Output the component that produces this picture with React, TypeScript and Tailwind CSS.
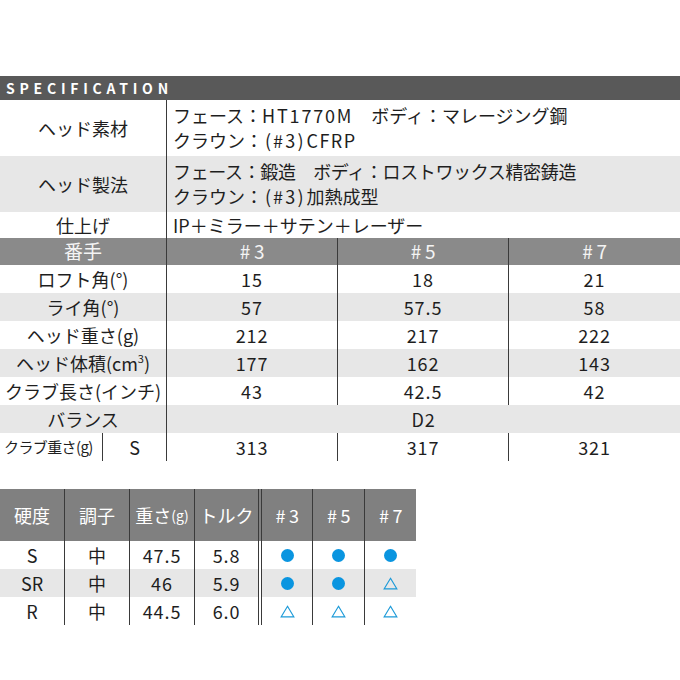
import React from "react";

const LINE = "border-[#3a3a3a]";

function Dot() {
  return <span className="inline-block w-[13px] h-[13px] rounded-full bg-[#0a95e0]" />;
}
function Tri() {
  return (
    <svg width="15" height="13" viewBox="0 0 15 13">
      <path d="M7.5 1.3 L13.8 11.8 L1.2 11.8 Z" fill="none" stroke="#1c9ad8" strokeWidth="1.2" />
    </svg>
  );
}

function Paren3() {
  return (
    <span>
      <span className="mx-[2px]">(</span>
      <span className="tracking-[0.12em]">#3</span>
      <span className="mr-[3px]">)</span>
    </span>
  );
}

const rows: { label: React.ReactNode; v: string[]; gray: boolean }[] = [
  { label: "ロフト角(°)", v: ["15", "18", "21"], gray: false },
  { label: "ライ角(°)", v: ["57", "57.5", "58"], gray: true },
  { label: "ヘッド重さ(g)", v: ["212", "217", "222"], gray: false },
  {
    label: (
      <>
        ヘッド体積(cm<span className="text-[11px] relative -top-[5px]">3</span>)
      </>
    ),
    v: ["177", "162", "143"],
    gray: true,
  },
  { label: "クラブ長さ(インチ)", v: ["43", "42.5", "42"], gray: false },
];

const shafts = [
  { h: "S", c: "中", w: "47.5", t: "5.8", m: ["d", "d", "d"], gray: false },
  { h: "SR", c: "中", w: "46", t: "5.9", m: ["d", "d", "t"], gray: true },
  { h: "R", c: "中", w: "44.5", t: "6.0", m: ["t", "t", "t"], gray: false },
];

const NUM = "tracking-[0.05em]";

export default function App() {
  return (
    <div
      className="w-[680px] h-[680px] bg-white text-[#1e1e1e] overflow-hidden"
      style={{ fontFamily: "'Noto Sans CJK JP', 'Noto Sans', sans-serif" }}
    >
      <div className="h-[76px]" />
      <div className="h-[24px] bg-[#595959] text-white font-bold text-[14px] tracking-[0.34em] pl-[6px] flex items-center">
        SPECIFICATION
      </div>

      {/* spec rows */}
      <div className="flex h-[56px] text-[18px]">
        <div className="w-[166px] flex items-center justify-center">ヘッド素材</div>
        <div className={`flex-1 border-l ${LINE} pl-[6px] flex flex-col justify-center leading-[25px]`}>
          <div className="whitespace-nowrap">
            フェース：<span className="tracking-[0.1em]">HT1770M</span>　ボディ：マレージング鋼
          </div>
          <div className="whitespace-nowrap">
            クラウン：<Paren3 />
            <span className="tracking-[0.08em]">CFRP</span>
          </div>
        </div>
      </div>
      <div className="flex h-[56px] text-[18px] bg-[#e7e7e7]">
        <div className="w-[166px] flex items-center justify-center">ヘッド製法</div>
        <div className={`flex-1 border-l ${LINE} pl-[6px] flex flex-col justify-center leading-[25px]`}>
          <div className="whitespace-nowrap tracking-[-0.02em]">フェース：鍛造　ボディ：ロストワックス精密鋳造</div>
          <div className="whitespace-nowrap">
            クラウン：<Paren3 />加熱成型
          </div>
        </div>
      </div>
      <div className="flex h-[26px] text-[18px]">
        <div className="w-[166px] flex items-center justify-center">仕上げ</div>
        <div className={`flex-1 border-l ${LINE} pl-[6px] flex items-center`}>IP＋ミラー＋サテン＋レーザー</div>
      </div>

      {/* header */}
      <div className="flex h-[27px] bg-[#8a8a8a] text-[#f4f4f4] text-[19px]">
        <div className="w-[166px] flex items-center justify-center">番手</div>
        <div className={`w-[171px] border-l ${LINE} flex items-center justify-center tracking-[0.2em] pl-[4px]`}>#3</div>
        <div className={`w-[171px] border-l ${LINE} flex items-center justify-center tracking-[0.2em] pl-[4px]`}>#5</div>
        <div className={`flex-1 border-l ${LINE} flex items-center justify-center tracking-[0.2em] pl-[4px]`}>#7</div>
      </div>

      {rows.map((r, i) => (
        <div key={i} className={`flex h-[28px] text-[18px] ${r.gray ? "bg-[#e7e7e7]" : ""}`}>
          <div className="w-[166px] flex items-center justify-center whitespace-nowrap">{r.label}</div>
          <div className={`w-[171px] border-l ${LINE} flex items-center justify-center ${NUM}`}>{r.v[0]}</div>
          <div className={`w-[171px] border-l ${LINE} flex items-center justify-center ${NUM}`}>{r.v[1]}</div>
          <div className={`flex-1 border-l ${LINE} flex items-center justify-center ${NUM}`}>{r.v[2]}</div>
        </div>
      ))}
      <div className="flex h-[28px] text-[18px] bg-[#e7e7e7]">
        <div className="w-[166px] flex items-center justify-center">バランス</div>
        <div className={`flex-1 border-l ${LINE} flex items-center justify-center ${NUM}`}>D2</div>
      </div>
      <div className="flex h-[28px] text-[18px]">
        <div className={`w-[103px] border-r ${LINE} flex items-center pl-[4px] text-[15px] tracking-[-0.04em] whitespace-nowrap`}>
          クラブ重さ(g)
        </div>
        <div className="w-[63px] flex items-center justify-center">S</div>
        <div className={`w-[171px] border-l ${LINE} flex items-center justify-center ${NUM}`}>313</div>
        <div className={`w-[171px] border-l ${LINE} flex items-center justify-center ${NUM}`}>317</div>
        <div className={`flex-1 border-l ${LINE} flex items-center justify-center ${NUM}`}>321</div>
      </div>

      <div className="h-[28px]" />

      {/* shaft table */}
      <div className="w-[416px] text-[18px]">
        <div className="flex h-[52px] bg-[#808080] text-white">
          <div className="w-[64px] flex items-center justify-center">硬度</div>
          <div className={`w-[65px] border-l ${LINE} flex items-center justify-center`}>調子</div>
          <div className={`w-[65px] border-l ${LINE} flex items-center justify-center whitespace-nowrap`}>
            重さ<span className="text-[14px]">(g)</span>
          </div>
          <div className={`w-[64px] border-l ${LINE} flex items-center justify-center`}>トルク</div>
          <div className={`w-[4px] border-l border-r ${LINE}`} />
          <div className="w-[50px] flex items-center justify-center tracking-[0.2em] pl-[4px]">#3</div>
          <div className={`w-[52px] border-l ${LINE} flex items-center justify-center tracking-[0.2em] pl-[4px]`}>#5</div>
          <div className={`w-[52px] border-l ${LINE} flex items-center justify-center tracking-[0.2em] pl-[4px]`}>#7</div>
        </div>
        {shafts.map((s, i) => (
          <div key={i} className={`flex h-[28px] ${s.gray ? "bg-[#e7e7e7]" : ""}`}>
            <div className="w-[64px] flex items-center justify-center">{s.h}</div>
            <div className={`w-[65px] border-l ${LINE} flex items-center justify-center`}>{s.c}</div>
            <div className={`w-[65px] border-l ${LINE} flex items-center justify-center ${NUM}`}>{s.w}</div>
            <div className={`w-[64px] border-l ${LINE} flex items-center justify-center ${NUM}`}>{s.t}</div>
            <div className={`w-[4px] border-l border-r ${LINE} bg-white`} />
            <div className="w-[50px] flex items-center justify-center">{s.m[0] === "d" ? <Dot /> : <Tri />}</div>
            <div className={`w-[52px] border-l ${LINE} flex items-center justify-center`}>{s.m[1] === "d" ? <Dot /> : <Tri />}</div>
            <div className={`w-[52px] border-l ${LINE} flex items-center justify-center`}>{s.m[2] === "d" ? <Dot /> : <Tri />}</div>
          </div>
        ))}
      </div>
    </div>
  );
}
